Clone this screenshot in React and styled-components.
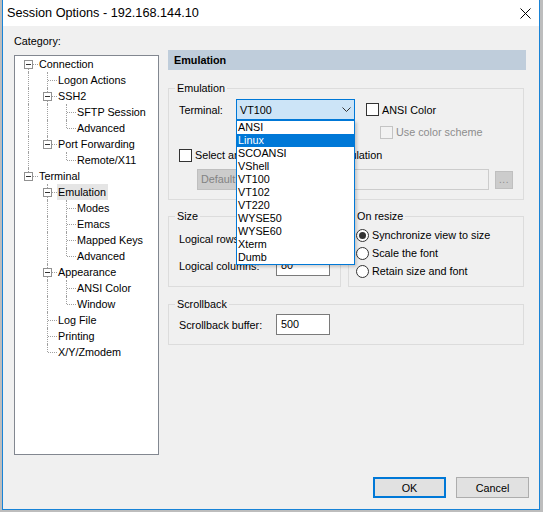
import React from 'react';
import styled, { createGlobalStyle } from 'styled-components';

const GlobalStyle = createGlobalStyle`
  html, body {
    margin: 0;
    padding: 0;
  }
  body {
    width: 543px;
    height: 512px;
    overflow: hidden;
    background: #bdbdbd;
    font-family: "Liberation Sans", Arial, sans-serif;
    font-size: 10.8px;
    color: #000;
  }
  * {
    box-sizing: border-box;
  }
`;

const Window = styled.div`
  margin-left: 2px;
  width: 538px;
  height: 510px;
  display: flex;
  flex-direction: column;
  background: #f0f0f0;
  border: 1px solid #1883d7;
  border-top: none;
`;

const TitleBar = styled.div`
  height: 26px;
  flex: none;
  display: flex;
  align-items: center;
  justify-content: space-between;
  padding: 0 8px 0 4px;
  background: #fff;
  font-size: 12.7px;
`;

const Body = styled.div`
  flex: 1;
  display: flex;
  flex-direction: column;
`;

const Main = styled.div`
  display: flex;
  padding: 7px 12px 0 11px;
`;

const LeftCol = styled.div`
  width: 145px;
  flex: none;
  display: flex;
  flex-direction: column;
`;

const CategoryLabel = styled.div`
  line-height: 16px;
  margin-bottom: 6px;
`;

const TreeBox = styled.div`
  height: 400px;
  background: #fff;
  border: 1px solid #828790;
  padding-left: 4px;
`;

const TreeRow = styled.div`
  display: flex;
  height: 16px;
`;

const Guide = styled.div`
  width: 19px;
  height: 16px;
  flex: none;
  position: relative;

  &::before {
    content: '';
    display: ${p => (p.$on ? 'block' : 'none')};
    position: absolute;
    left: 9px;
    top: 0;
    bottom: 0;
    border-left: 1px dotted #a0a0a0;
  }
`;

const Connector = styled.div`
  width: 19px;
  height: 16px;
  flex: none;
  position: relative;

  &::before {
    content: '';
    position: absolute;
    left: 9px;
    top: ${p => (p.$first ? '8px' : '0')};
    bottom: ${p => (p.$last ? '8px' : '0')};
    border-left: 1px dotted #a0a0a0;
  }

  &::after {
    content: '';
    position: absolute;
    left: 10px;
    top: 8px;
    width: 9px;
    border-top: 1px dotted #a0a0a0;
  }
`;

const Expander = styled.span`
  position: absolute;
  left: 5px;
  top: 4px;
  width: 9px;
  height: 9px;
  z-index: 1;
  background: #fff;
  border: 1px solid #919191;

  &::after {
    content: '';
    position: absolute;
    left: 1px;
    top: 3px;
    width: 5px;
    height: 1px;
    background: #333;
  }
`;

const NodeLabel = styled.span`
  line-height: 16px;
  padding: 0 2px 0 1px;
  white-space: nowrap;
  background: ${p => (p.$selected ? '#e5e5e5' : 'transparent')};
`;

const RightCol = styled.div`
  width: 358px;
  margin-left: 9px;
  margin-top: 17px;
  display: flex;
  flex-direction: column;
`;

const PanelHeader = styled.div`
  height: 20px;
  line-height: 20px;
  padding-left: 6px;
  background: #bfcddb;
  font-weight: bold;
`;

const Group = styled.fieldset`
  margin: ${p => p.$mt || 0}px ${p => (p.$inRow ? 0 : 2)}px 0 0;
  min-width: 0;
  border: 1px solid #dcdcdc;
  padding: ${p => p.$pt}px 8px ${p => p.$pb}px ${p => p.$pl}px;
  flex: ${p => (p.$grow ? 1 : 'none')};
  width: ${p => (p.$w ? `${p.$w}px` : 'auto')};
`;

const Legend = styled.legend`
  padding: 0 2px;
  margin-left: ${p => 6 - p.$pl}px;
  line-height: 16px;
`;

const GroupRow = styled.div`
  display: flex;
  gap: 7px;
  margin: 8px 2px 0 0;
`;

const FieldRow = styled.div`
  display: flex;
  align-items: center;
  height: ${p => p.$h}px;
  margin-top: ${p => p.$mt || 0}px;
`;

const FieldLabel = styled.span`
  width: ${p => p.$w}px;
  flex: none;
  white-space: nowrap;
`;

const ComboWrap = styled.div`
  position: relative;
  width: 119px;
  height: 21px;
  flex: none;
`;

const Combo = styled.div`
  height: 100%;
  display: flex;
  align-items: center;
  justify-content: space-between;
  padding: 0 3px 0 3px;
  background: #cce4f7;
  border: 1px solid #0078d7;
`;

const DropList = styled.div`
  position: absolute;
  top: 100%;
  left: 0;
  width: 119px;
  z-index: 5;
  background: #fff;
  border: 1px solid #0078d7;
  box-shadow: 2px 2px 3px rgba(0, 0, 0, 0.18);
`;

const DropItem = styled.div`
  height: 13px;
  line-height: 13px;
  padding-left: 1px;
  background: ${p => (p.$active ? '#0078d7' : '#fff')};
  color: ${p => (p.$active ? '#fff' : '#000')};
`;

const Check = styled.span`
  width: 13px;
  height: 13px;
  flex: none;
  margin-left: ${p => p.$ml || 0}px;
  background: ${p => (p.$disabled ? '#f2f2f2' : '#fff')};
  border: 1px solid ${p => (p.$disabled ? '#c4c4c4' : '#333')};
`;

const CheckText = styled.span`
  margin-left: 3px;
  white-space: nowrap;
  color: ${p => (p.$disabled ? '#8d8d8d' : '#000')};
`;

const DisabledCombo = styled.div`
  width: 72px;
  height: 21px;
  margin-left: 18px;
  padding-left: 3px;
  line-height: 19px;
  color: #838383;
  background: #cccccc;
  border: 1px solid #bfbfbf;
`;

const DisabledField = styled.div`
  width: 215px;
  height: 21px;
  margin-left: 5px;
  background: #f0f0f0;
  border: 1px solid #cccccc;
`;

const DotsButton = styled.div`
  width: 18px;
  height: 18px;
  margin-left: 6px;
  display: flex;
  align-items: center;
  justify-content: center;
  color: #8d8d8d;
  background: #cccccc;
  border: 1px solid #bfbfbf;
  font-size: 10px;
  letter-spacing: 0.5px;
`;

const TextField = styled.div`
  width: 54px;
  height: 21px;
  line-height: 19px;
  padding-left: 4px;
  background: #fff;
  border: 1px solid #7a7a7a;
`;

const Radio = styled.span`
  position: relative;
  width: 13px;
  height: 13px;
  flex: none;
  border-radius: 50%;
  background: #fff;
  border: 1px solid #333;

  &::after {
    content: '';
    display: ${p => (p.$checked ? 'block' : 'none')};
    position: absolute;
    inset: 2px;
    border-radius: 50%;
    background: #333;
  }
`;

const RadioText = styled.span`
  margin-left: 3px;
  white-space: nowrap;
`;

const Footer = styled.div`
  margin-top: auto;
  display: flex;
  justify-content: flex-end;
  gap: 10px;
  padding: 0 10px 11px 0;
`;

const Button = styled.div`
  width: 73px;
  height: 21px;
  display: flex;
  align-items: center;
  justify-content: center;
  background: #e1e1e1;
  border: ${p => (p.$primary ? '2px solid #0078d7' : '1px solid #adadad')};
`;

const tree = [
  {
    label: 'Connection',
    children: [
      { label: 'Logon Actions' },
      { label: 'SSH2', children: [{ label: 'SFTP Session' }, { label: 'Advanced' }] },
      { label: 'Port Forwarding', children: [{ label: 'Remote/X11' }] },
    ],
  },
  {
    label: 'Terminal',
    children: [
      {
        label: 'Emulation',
        selected: true,
        children: [
          { label: 'Modes' },
          { label: 'Emacs' },
          { label: 'Mapped Keys' },
          { label: 'Advanced' },
        ],
      },
      { label: 'Appearance', children: [{ label: 'ANSI Color' }, { label: 'Window' }] },
      { label: 'Log File' },
      { label: 'Printing' },
      { label: 'X/Y/Zmodem' },
    ],
  },
];

const flatten = (nodes, guides = [], out = []) => {
  nodes.forEach((node, i) => {
    const last = i === nodes.length - 1;
    const first = guides.length === 0 && i === 0;
    out.push({ ...node, guides, last, first });
    if (node.children) flatten(node.children, [...guides, !last], out);
  });
  return out;
};

const terminals = ['ANSI', 'Linux', 'SCOANSI', 'VShell', 'VT100', 'VT102', 'VT220', 'WYSE50', 'WYSE60', 'Xterm', 'Dumb'];

const CloseIcon = () => (
  <svg width="11" height="11" viewBox="0 0 11 11">
    <path d="M0.5 0.5 L10.5 10.5 M10.5 0.5 L0.5 10.5" stroke="#000" strokeWidth="1" />
  </svg>
);

const Chevron = () => (
  <svg width="9" height="5" viewBox="0 0 9 5">
    <polyline points="0.5,0.5 4.5,4.5 8.5,0.5" fill="none" stroke="#333" strokeWidth="1" />
  </svg>
);

const App = () => {
  const rows = flatten(tree);

  return (
    <>
      <GlobalStyle />
      <Window>
        <TitleBar>
          <span>Session Options - 192.168.144.10</span>
          <CloseIcon />
        </TitleBar>
        <Body>
          <Main>
            <LeftCol>
              <CategoryLabel>Category:</CategoryLabel>
              <TreeBox>
                {rows.map((row, i) => (
                  <TreeRow key={i}>
                    {row.guides.map((on, j) => (
                      <Guide key={j} $on={on} />
                    ))}
                    <Connector $first={row.first} $last={row.last}>
                      {row.children && <Expander />}
                    </Connector>
                    <NodeLabel $selected={row.selected}>{row.label}</NodeLabel>
                  </TreeRow>
                ))}
              </TreeBox>
            </LeftCol>

            <RightCol>
              <PanelHeader>Emulation</PanelHeader>

              <Group $mt={10} $pt={3} $pb={9} $pl={10}>
                <Legend $pl={10}>Emulation</Legend>
                <FieldRow $h={21}>
                  <FieldLabel $w={57}>Terminal:</FieldLabel>
                  <ComboWrap>
                    <Combo>
                      <span>VT100</span>
                      <Chevron />
                    </Combo>
                    <DropList>
                      {terminals.map(t => (
                        <DropItem key={t} $active={t === 'Linux'}>{t}</DropItem>
                      ))}
                    </DropList>
                  </ComboWrap>
                  <Check $ml={11} />
                  <CheckText>ANSI Color</CheckText>
                </FieldRow>
                <FieldRow $h={16} $mt={4}>
                  <Check $ml={201} $disabled />
                  <CheckText $disabled>Use color scheme</CheckText>
                </FieldRow>
                <FieldRow $h={16} $mt={7}>
                  <Check />
                  <CheckText>Select an alternate keyboard emulation</CheckText>
                </FieldRow>
                <FieldRow $h={21} $mt={6}>
                  <DisabledCombo>Default</DisabledCombo>
                  <DisabledField />
                  <DotsButton>...</DotsButton>
                </FieldRow>
              </Group>

              <GroupRow>
                <Group $inRow $w={173} $pt={4} $pb={9} $pl={10}>
                  <Legend $pl={10}>Size</Legend>
                  <FieldRow $h={21}>
                    <FieldLabel $w={97}>Logical rows:</FieldLabel>
                    <TextField>24</TextField>
                  </FieldRow>
                  <FieldRow $h={21} $mt={6}>
                    <FieldLabel $w={97}>Logical columns:</FieldLabel>
                    <TextField>80</TextField>
                  </FieldRow>
                </Group>
                <Group $inRow $grow $pt={2} $pb={6} $pl={7}>
                  <Legend $pl={7}>On resize</Legend>
                  <FieldRow $h={18}>
                    <Radio $checked />
                    <RadioText>Synchronize view to size</RadioText>
                  </FieldRow>
                  <FieldRow $h={18}>
                    <Radio />
                    <RadioText>Scale the font</RadioText>
                  </FieldRow>
                  <FieldRow $h={18}>
                    <Radio />
                    <RadioText>Retain size and font</RadioText>
                  </FieldRow>
                </Group>
              </GroupRow>

              <Group $mt={9} $pt={2} $pb={9} $pl={10}>
                <Legend $pl={10}>Scrollback</Legend>
                <FieldRow $h={21}>
                  <FieldLabel $w={97}>Scrollback buffer:</FieldLabel>
                  <TextField>500</TextField>
                </FieldRow>
              </Group>
            </RightCol>
          </Main>

          <Footer>
            <Button $primary>OK</Button>
            <Button>Cancel</Button>
          </Footer>
        </Body>
      </Window>
    </>
  );
};

export default App;
